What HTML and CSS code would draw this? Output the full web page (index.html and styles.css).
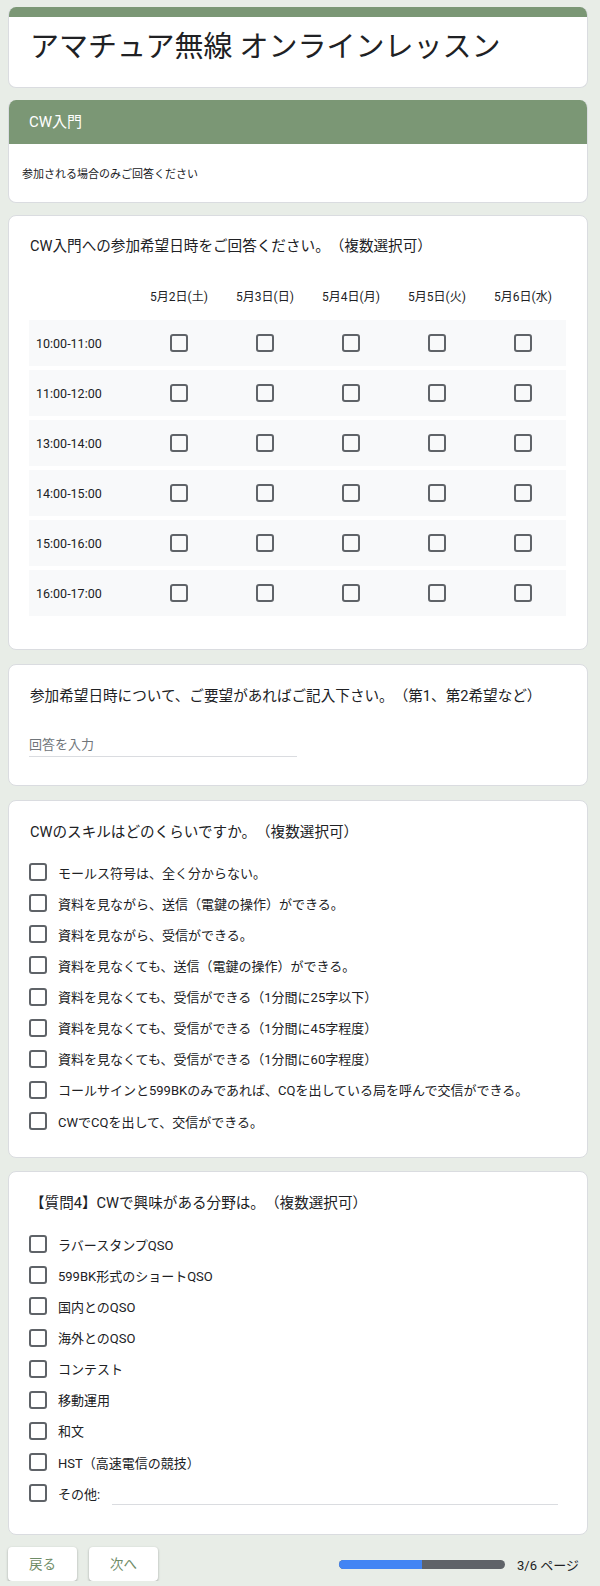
FILE: index.html
```html
<!DOCTYPE html>
<html lang="ja">
<head>
<meta charset="utf-8">
<title>アマチュア無線 オンラインレッスン</title>
<link rel="stylesheet" href="styles.css">
</head>
<body>
<div class="page">
  <div class="card title-card">
    <div class="band"></div>
    <h1 class="form-title">アマチュア無線 オンラインレッスン</h1>
  </div>

  <div class="card section-card">
    <div class="section-head">CW入門</div>
    <div class="section-desc">参加される場合のみご回答ください</div>
  </div>

  <div class="card q1">
    <div class="q-title">CW入門への参加希望日時をご回答ください。（複数選択可）</div>
    <div class="grid">
      <div class="grid-head">
        <span></span>
        <span>5月2日(土)</span>
        <span>5月3日(日)</span>
        <span>5月4日(月)</span>
        <span>5月5日(火)</span>
        <span>5月6日(水)</span>
      </div>
      <div class="grid-row"><span class="rl">10:00-11:00</span><span class="cell"><i class="cb"></i></span><span class="cell"><i class="cb"></i></span><span class="cell"><i class="cb"></i></span><span class="cell"><i class="cb"></i></span><span class="cell"><i class="cb"></i></span></div>
      <div class="grid-row"><span class="rl">11:00-12:00</span><span class="cell"><i class="cb"></i></span><span class="cell"><i class="cb"></i></span><span class="cell"><i class="cb"></i></span><span class="cell"><i class="cb"></i></span><span class="cell"><i class="cb"></i></span></div>
      <div class="grid-row"><span class="rl">13:00-14:00</span><span class="cell"><i class="cb"></i></span><span class="cell"><i class="cb"></i></span><span class="cell"><i class="cb"></i></span><span class="cell"><i class="cb"></i></span><span class="cell"><i class="cb"></i></span></div>
      <div class="grid-row"><span class="rl">14:00-15:00</span><span class="cell"><i class="cb"></i></span><span class="cell"><i class="cb"></i></span><span class="cell"><i class="cb"></i></span><span class="cell"><i class="cb"></i></span><span class="cell"><i class="cb"></i></span></div>
      <div class="grid-row"><span class="rl">15:00-16:00</span><span class="cell"><i class="cb"></i></span><span class="cell"><i class="cb"></i></span><span class="cell"><i class="cb"></i></span><span class="cell"><i class="cb"></i></span><span class="cell"><i class="cb"></i></span></div>
      <div class="grid-row"><span class="rl">16:00-17:00</span><span class="cell"><i class="cb"></i></span><span class="cell"><i class="cb"></i></span><span class="cell"><i class="cb"></i></span><span class="cell"><i class="cb"></i></span><span class="cell"><i class="cb"></i></span></div>
    </div>
  </div>

  <div class="card q2">
    <div class="q-title">参加希望日時について、ご要望があればご記入下さい。（第1、第2希望など）</div>
    <div class="text-input">回答を入力</div>
  </div>

  <div class="card q3">
    <div class="q-title">CWのスキルはどのくらいですか。（複数選択可）</div>
    <div class="opts">
      <div class="opt"><i class="cb"></i><span>モールス符号は、全く分からない。</span></div>
      <div class="opt"><i class="cb"></i><span>資料を見ながら、送信（電鍵の操作）ができる。</span></div>
      <div class="opt"><i class="cb"></i><span>資料を見ながら、受信ができる。</span></div>
      <div class="opt"><i class="cb"></i><span>資料を見なくても、送信（電鍵の操作）ができる。</span></div>
      <div class="opt"><i class="cb"></i><span>資料を見なくても、受信ができる（1分間に25字以下）</span></div>
      <div class="opt"><i class="cb"></i><span>資料を見なくても、受信ができる（1分間に45字程度）</span></div>
      <div class="opt"><i class="cb"></i><span>資料を見なくても、受信ができる（1分間に60字程度）</span></div>
      <div class="opt"><i class="cb"></i><span>コールサインと599BKのみであれば、CQを出している局を呼んで交信ができる。</span></div>
      <div class="opt"><i class="cb"></i><span>CWでCQを出して、交信ができる。</span></div>
    </div>
  </div>

  <div class="card q4">
    <div class="q-title">【質問4】CWで興味がある分野は。（複数選択可）</div>
    <div class="opts">
      <div class="opt"><i class="cb"></i><span>ラバースタンプQSO</span></div>
      <div class="opt"><i class="cb"></i><span>599BK形式のショートQSO</span></div>
      <div class="opt"><i class="cb"></i><span>国内とのQSO</span></div>
      <div class="opt"><i class="cb"></i><span>海外とのQSO</span></div>
      <div class="opt"><i class="cb"></i><span>コンテスト</span></div>
      <div class="opt"><i class="cb"></i><span>移動運用</span></div>
      <div class="opt"><i class="cb"></i><span>和文</span></div>
      <div class="opt"><i class="cb"></i><span>HST（高速電信の競技）</span></div>
      <div class="opt"><i class="cb"></i><span>その他:</span><span class="other-line"></span></div>
    </div>
  </div>

  <div class="footer">
    <div class="btn">戻る</div>
    <div class="btn">次へ</div>
    <div class="progress">
      <div class="bar"><div class="fill"></div></div>
      <span class="page-no">3/6 ページ</span>
    </div>
  </div>
</div>
</body>
</html>
```

FILE: styles.css
```css
* { box-sizing: border-box; }

html, body {
  margin: 0;
  padding: 0;
  background: #e8ede7;
}

body {
  font-family: Roboto, "Noto Sans CJK JP", sans-serif;
  color: #202124;
  text-spacing-trim: space-all;
}

.page {
  width: 580px;
  margin-left: 8px;
  padding-top: 7px;
}

.card {
  background: #fff;
  border: 1px solid #dadce0;
  border-radius: 8px;
  margin-top: 14px;
}

.title-card {
  margin-top: 0;
  border-top: none;
  overflow: hidden;
  padding-bottom: 18px;
}

.band {
  height: 10px;
  background: #7b9775;
  margin: 0 -1px;
}

.form-title {
  margin: 8px 0 0 0;
  padding-left: 21px;
  font-size: 29px;
  font-weight: 400;
  line-height: 44px;
  letter-spacing: 0;
}

.section-card {
  margin-top: 12px;
  overflow: hidden;
  border-top: none;
}

.section-head {
  height: 44px;
  line-height: 44px;
  background: #7b9775;
  color: #fff;
  font-size: 15px;
  padding-left: 21px;
  margin: 0 -1px;
}

.section-desc {
  padding: 23px 0 19px 13px;
  font-size: 11px;
  line-height: 16px;
}

.q-title {
  font-size: 14.6px;
  line-height: 22px;
  padding-left: 21px;
}

.q1 { padding: 19px 0 33px 0; margin-top: 12px; }

.grid {
  margin: 28px 0 0 20px;
  width: 537px;
}

.grid-head,
.grid-row {
  display: grid;
  grid-template-columns: 107px repeat(5, 86px);
  align-items: center;
}

.grid-head {
  height: 24px;
  line-height: 24px;
  font-size: 12px;
  text-align: center;
  margin-bottom: 11px;
}

.grid-row {
  height: 46px;
  background: #f8f9fa;
  margin-top: 4px;
}

.grid-head + .grid-row { margin-top: 0; }

.rl {
  padding-left: 7px;
  font-size: 12.5px;
}

.cell {
  display: flex;
  justify-content: center;
  align-items: center;
}

.cb {
  display: inline-block;
  width: 18px;
  height: 18px;
  border: 2px solid #5f6368;
  border-radius: 3px;
  flex: none;
}

.q2 { padding: 20px 0 28px 0; }

.text-input {
  margin: 29px 0 0 20px;
  width: 268px;
  font-size: 13px;
  line-height: 18px;
  color: #70757a;
  padding-bottom: 2px;
  border-bottom: 1px solid #dadce0;
}

.q3 { padding: 20px 0 20.5px 0; margin-top: 14px; }
.q3 .opts { margin-top: 13.5px; }

.q4 { padding: 20px 0 25.4px 0; margin-top: 13px; }
.q4 .opts { margin-top: 14.5px; }

.opts { padding-left: 20px; padding-right: 29px; }

.opt {
  display: flex;
  align-items: center;
  height: 31.125px;
  font-size: 13px;
}

.opt .cb { margin-right: 11px; }

.other-line {
  flex: 1;
  margin-left: 12px;
  align-self: flex-end;
  height: 1px;
  background: #dadce0;
  margin-bottom: 4px;
}

.footer {
  display: flex;
  align-items: center;
  margin-top: 12px;
  height: 34px;
}

.btn {
  width: 69px;
  height: 34px;
  line-height: 34px;
  text-align: center;
  background: #fff;
  border-radius: 4px;
  box-shadow: 0 1px 2px rgba(60, 64, 67, 0.3), 0 1px 3px rgba(60, 64, 67, 0.15);
  color: #6f8c67;
  font-size: 13.5px;
  margin-right: 12px;
}

.progress {
  margin-left: auto;
  display: flex;
  align-items: center;
  padding-right: 9px;
}

.bar {
  width: 166px;
  height: 9px;
  border-radius: 5px;
  background: #5f6368;
  overflow: hidden;
}

.fill {
  width: 50%;
  height: 100%;
  background: #4285f4;
}

.page-no {
  margin-left: 12px;
  font-size: 13px;
}
```
